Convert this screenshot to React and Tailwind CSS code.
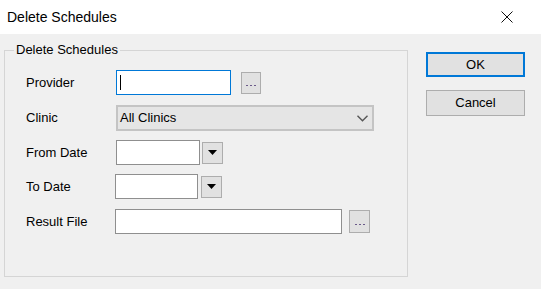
import React from 'react';

const font = { fontFamily: '"Liberation Sans", Arial, sans-serif' };

function Dots() {
  return (
    <span className="flex gap-[2px] mt-[6px]">
      <span className="w-[2px] h-[1px] bg-[#6b5a8a]" />
      <span className="w-[2px] h-[1px] bg-[#6b5a8a]" />
      <span className="w-[2px] h-[1px] bg-[#6b5a8a]" />
    </span>
  );
}

function BrowseButton({ w = 'w-[20px]', h = 'h-[22px]' }) {
  return (
    <div className={`${w} ${h} bg-[#e1e1e1] border border-[#adadad] flex items-center justify-center`}>
      <Dots />
    </div>
  );
}

function DropButton() {
  return (
    <div className="w-[21px] h-[22px] bg-[#e1e1e1] border border-[#adadad] flex items-center justify-center">
      <svg width="9" height="5" viewBox="0 0 9 5"><path d="M0 0h9L4.5 5z" fill="#000" /></svg>
    </div>
  );
}

function Label({ children, w = 'w-[90px]' }) {
  return <div className={`${w} text-[13px] text-black shrink-0`}>{children}</div>;
}

export default function App() {
  return (
    <div className="w-[541px] h-[289px] bg-[#f0f0f0] flex flex-col overflow-hidden" style={font}>
      {/* Title bar */}
      <div className="h-[34px] bg-white flex items-center justify-between pl-[7px] pr-[28px] shrink-0">
        <span className="text-[14px] text-black">Delete Schedules</span>
        <svg width="12" height="12" viewBox="0 0 12 12">
          <path d="M0.5 0.5L11.5 11.5M11.5 0.5L0.5 11.5" stroke="#111" strokeWidth="1" />
        </svg>
      </div>

      <div className="flex">
        {/* Group box */}
        <div className="relative ml-[4px] mt-[16px] w-[404px] h-[227px] border border-[#d5d5d5] pl-[21px] pt-[19px]">
          <span className="absolute left-[9px] top-[-9px] px-[2px] bg-[#f0f0f0] text-[13px] leading-[16px] text-black">Delete Schedules</span>

          <div className="flex flex-col">
            <div className="flex items-center h-[25px]">
              <Label>Provider</Label>
              <div className="w-[115px] h-[25px] bg-white border border-[#0078d7] flex items-center pl-[3px]">
                <span className="w-[1px] h-[15px] bg-black" />
              </div>
              <div className="ml-[10px]"><BrowseButton /></div>
            </div>

            <div className="flex items-center h-[26px] mt-[10px]">
              <Label>Clinic</Label>
              <div className="w-[258px] h-[26px] bg-[#e5e5e5] border-2 border-[#c4c4c4] flex items-center justify-between pl-[2px] pr-[4px]">
                <span className="text-[13px] text-black">All Clinics</span>
                <svg width="11" height="7" viewBox="0 0 11 7">
                  <path d="M0.5 0.8L5.5 5.8L10.5 0.8" stroke="#555" strokeWidth="1.4" fill="none" />
                </svg>
              </div>
            </div>

            <div className="flex items-center h-[25px] mt-[9px]">
              <Label>From Date</Label>
              <div className="w-[84px] h-[25px] bg-white border border-[#8f8f8f]" />
              <div className="ml-[2px]"><DropButton /></div>
            </div>

            <div className="flex items-center h-[25px] mt-[9px]">
              <Label w="w-[89px]">To Date</Label>
              <div className="w-[83px] h-[25px] bg-white border border-[#8f8f8f]" />
              <div className="ml-[3px]"><DropButton /></div>
            </div>

            <div className="flex items-center h-[25px] mt-[10px]">
              <Label w="w-[89px]">Result File</Label>
              <div className="w-[227px] h-[25px] bg-white border border-[#8f8f8f]" />
              <div className="ml-[7px]"><BrowseButton w="w-[21px]" h="h-[23px]" /></div>
            </div>
          </div>
        </div>

        {/* Buttons */}
        <div className="flex flex-col ml-[18px] mt-[18px] gap-[13px]">
          <div className="w-[99px] h-[25px] bg-[#e1e1e1] border-2 border-[#0078d7] flex items-center justify-center text-[13px] text-black">OK</div>
          <div className="w-[99px] h-[26px] bg-[#e1e1e1] border border-[#adadad] flex items-center justify-center text-[13px] text-black">Cancel</div>
        </div>
      </div>
    </div>
  );
}
